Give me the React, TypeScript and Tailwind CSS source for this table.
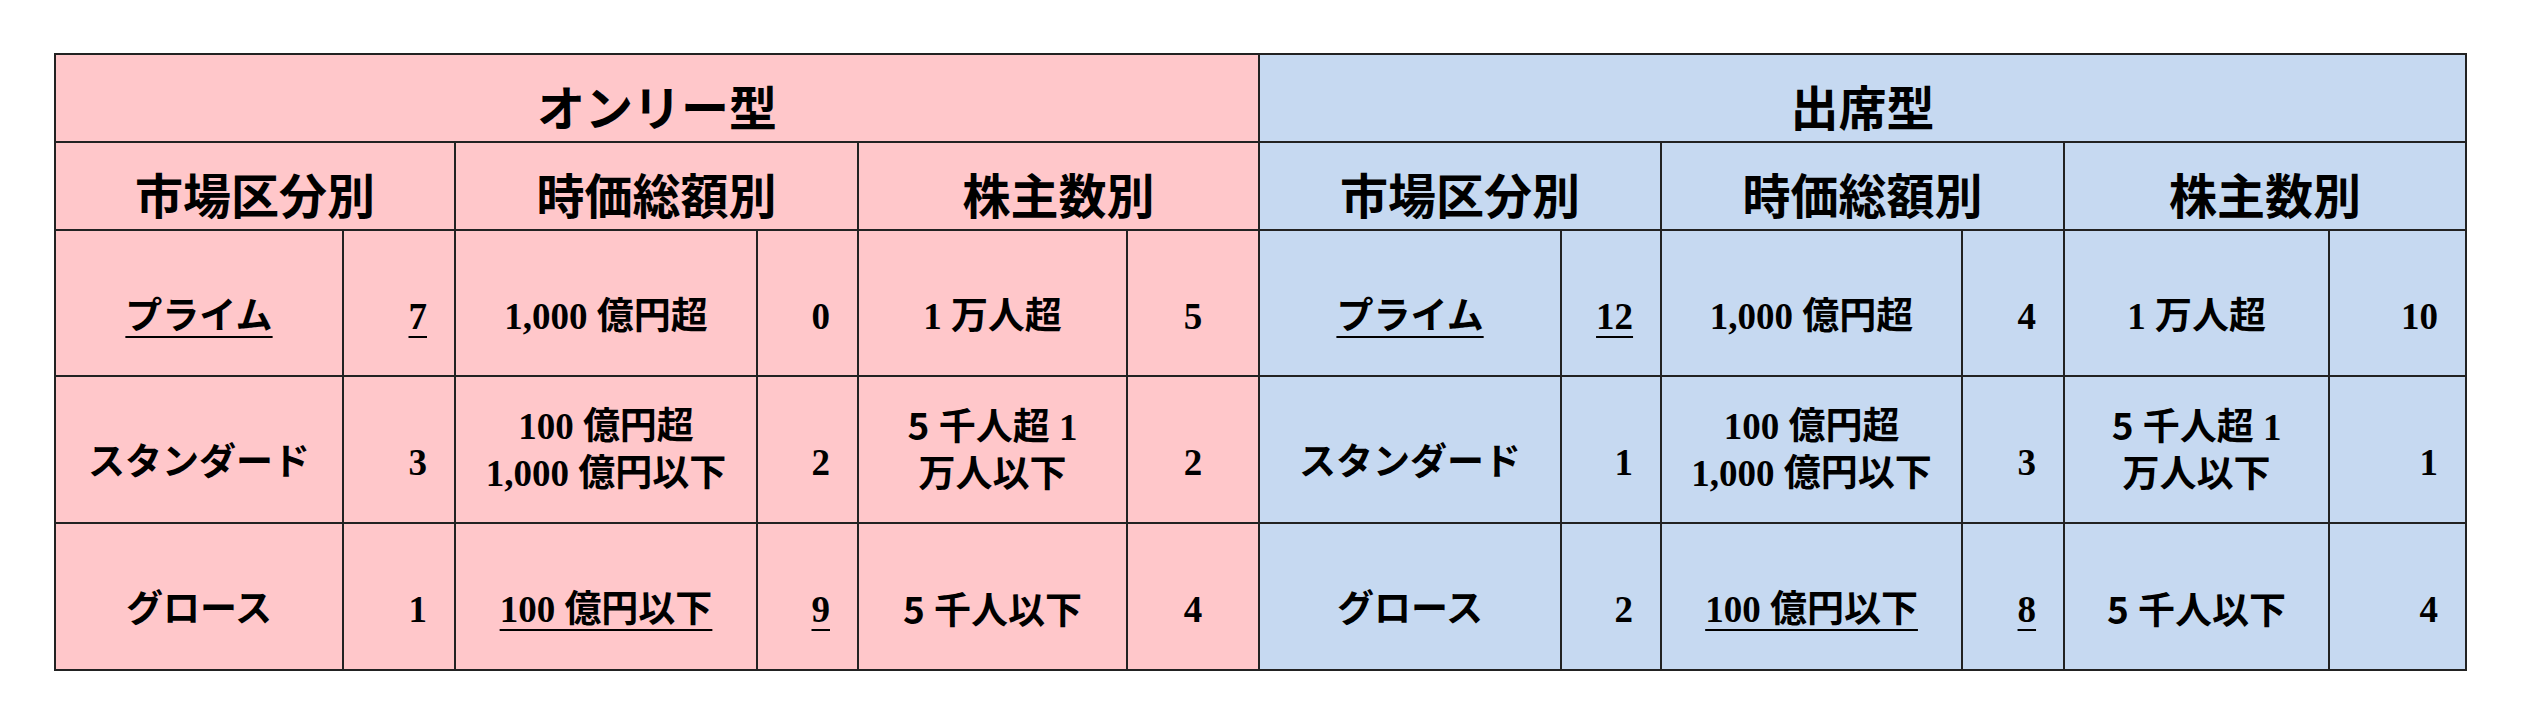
import React from "react";

type Cell = {
  text: React.ReactNode;
  kind: "label" | "num" | "numCenter";
  two?: boolean;
  u?: boolean;
};

type Group = { title: string; rows: [Cell, Cell][] };

const cols = [288, 112, 302, 101, 269, 132, 302, 100, 301, 102, 265, 137];

const goth = "font-['Noto_Sans_CJK_JP',sans-serif]";

const Five = () => <span className={goth}>5</span>;

const only: Group[] = [
  {
    title: "市場区分別",
    rows: [
      [{ text: "プライム", kind: "label", u: true }, { text: "7", kind: "num", u: true }],
      [{ text: "スタンダード", kind: "label" }, { text: "3", kind: "num" }],
      [{ text: "グロース", kind: "label" }, { text: "1", kind: "num" }],
    ],
  },
  {
    title: "時価総額別",
    rows: [
      [{ text: "1,000 億円超", kind: "label" }, { text: "0", kind: "num" }],
      [
        { text: <>100 億円超<br />1,000 億円以下</>, kind: "label", two: true },
        { text: "2", kind: "num" },
      ],
      [{ text: "100 億円以下", kind: "label", u: true }, { text: "9", kind: "num", u: true }],
    ],
  },
  {
    title: "株主数別",
    rows: [
      [{ text: "1 万人超", kind: "label" }, { text: "5", kind: "numCenter" }],
      [
        { text: <><Five /> 千人超 1<br />万人以下</>, kind: "label", two: true },
        { text: "2", kind: "numCenter" },
      ],
      [{ text: <><Five /> 千人以下</>, kind: "label" }, { text: "4", kind: "numCenter" }],
    ],
  },
];

const attend: Group[] = [
  {
    title: "市場区分別",
    rows: [
      [{ text: "プライム", kind: "label", u: true }, { text: "12", kind: "num", u: true }],
      [{ text: "スタンダード", kind: "label" }, { text: "1", kind: "num" }],
      [{ text: "グロース", kind: "label" }, { text: "2", kind: "num" }],
    ],
  },
  {
    title: "時価総額別",
    rows: [
      [{ text: "1,000 億円超", kind: "label" }, { text: "4", kind: "num" }],
      [
        { text: <>100 億円超<br />1,000 億円以下</>, kind: "label", two: true },
        { text: "3", kind: "num" },
      ],
      [{ text: "100 億円以下", kind: "label", u: true }, { text: "8", kind: "num", u: true }],
    ],
  },
  {
    title: "株主数別",
    rows: [
      [{ text: "1 万人超", kind: "label" }, { text: "10", kind: "num" }],
      [
        { text: <><Five /> 千人超 1<br />万人以下</>, kind: "label", two: true },
        { text: "1", kind: "num" },
      ],
      [{ text: <><Five /> 千人以下</>, kind: "label" }, { text: "4", kind: "num" }],
    ],
  },
];

function DataCell({ cell, bg }: { cell: Cell; bg: string }) {
  const align =
    cell.kind === "num" ? "text-right pr-[27px]" : "text-center";
  const pad = cell.two ? "" : "pt-[26px]";
  return (
    <td className={`${bg} ${align} ${pad} border-2 border-[#222] align-middle`}>
      <span
        className={
          cell.u
            ? "underline decoration-2 underline-offset-[7px]"
            : ""
        }
      >
        {cell.text}
      </span>
    </td>
  );
}

export default function App() {
  const pink = "bg-[#ffc7ca]";
  const blue = "bg-[#c6d9f1]";
  const sides = [
    { groups: only, bg: pink },
    { groups: attend, bg: blue },
  ];

  return (
    <div className="w-[2521px] h-[722px] bg-white pt-[53px] pl-[54px]">
      <table className="table-fixed border-collapse w-[2411px] text-black font-bold text-[37px] leading-[47px] font-['Liberation_Serif','Noto_Sans_CJK_JP',serif]">
        <colgroup>
          {cols.map((w, i) => (
            <col key={i} style={{ width: w }} />
          ))}
        </colgroup>
        <tbody>
          <tr className="h-[88px]">
            <td colSpan={6} className={`${pink} border-2 border-[#222] text-center pt-[14px] text-[48px] ${goth}`}>
              オンリー型
            </td>
            <td colSpan={6} className={`${blue} border-2 border-[#222] text-center pt-[14px] text-[48px] ${goth}`}>
              出席型
            </td>
          </tr>
          <tr className="h-[88px]">
            {sides.map((s) =>
              s.groups.map((g) => (
                <td
                  key={s.bg + g.title}
                  colSpan={2}
                  className={`${s.bg} border-2 border-[#222] text-center pt-[14px] text-[48px] ${goth}`}
                >
                  {g.title}
                </td>
              ))
            )}
          </tr>
          {[0, 1, 2].map((r) => (
            <tr key={r} className={r === 0 ? "h-[146px]" : "h-[147px]"}>
              {sides.map((s) =>
                s.groups.map((g) => (
                  <React.Fragment key={s.bg + g.title}>
                    <DataCell cell={g.rows[r][0]} bg={s.bg} />
                    <DataCell cell={g.rows[r][1]} bg={s.bg} />
                  </React.Fragment>
                ))
              )}
            </tr>
          ))}
        </tbody>
      </table>
    </div>
  );
}
